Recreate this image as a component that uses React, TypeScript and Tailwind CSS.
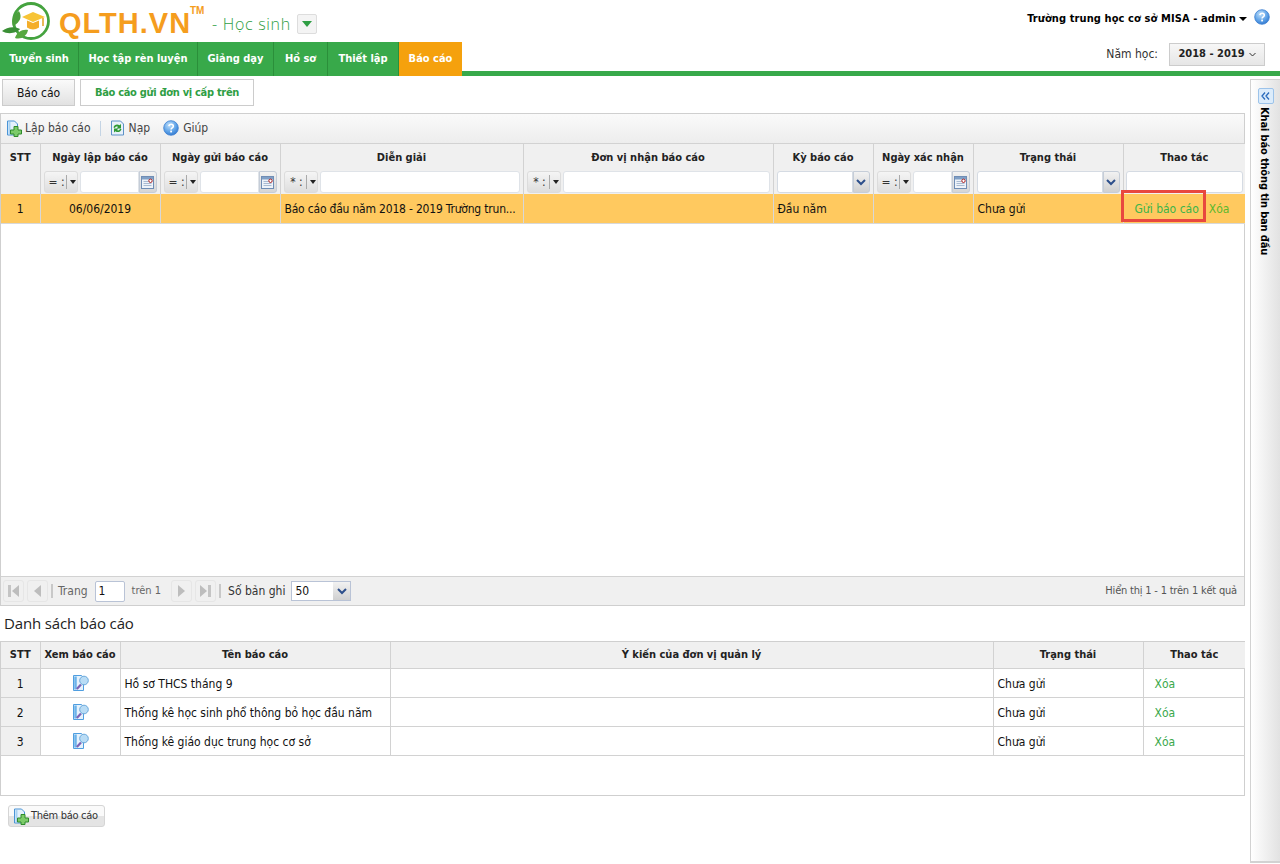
import React from "react";

const topCols = [39, 120, 120, 243, 250, 100, 100, 150, 122];
const bottomCols = [39, 80, 270, 603, 150, 102];

function HelpIcon({ size = 16 }: { size?: number }) {
  return (
    <svg width={size} height={size} viewBox="0 0 16 16" className="shrink-0">
      <defs>
        <radialGradient id="hg" cx="40%" cy="30%" r="80%">
          <stop offset="0" stopColor="#bfe0fb" />
          <stop offset="0.6" stopColor="#5a9fe6" />
          <stop offset="1" stopColor="#2a6ec8" />
        </radialGradient>
      </defs>
      <circle cx="8" cy="8" r="7.3" fill="url(#hg)" stroke="#3b7fd0" strokeWidth="0.8" />
      <path d="M5.8 6.2c.2-1.3 1.2-1.9 2.3-1.9 1.3 0 2.2.8 2.2 1.9 0 1.7-2.2 1.6-2.2 3.2" fill="none" stroke="#fff" strokeWidth="1.6" />
      <rect x="7.2" y="10.6" width="1.8" height="1.8" fill="#fff" />
    </svg>
  );
}

function DocPlusIcon() {
  return (
    <svg width="17" height="17" viewBox="0 0 17 17" className="shrink-0">
      <path d="M1.5 1h7l3 3v11h-10z" fill="#e4f1fc" stroke="#4a94d6" />
      <path d="M3.500 2v12" stroke="#a9d2f2" strokeWidth="2" />
      <path d="M8 6.500h4v3.500h3.500v4H12v2.500H8V14H4.500v-4H8z" fill="#7ccb69" stroke="#2f8a2c" />
    </svg>
  );
}

function RefreshIcon() {
  return (
    <svg width="15" height="16" viewBox="0 0 15 16" className="shrink-0">
      <path d="M1.5 1h9l3 3v11h-12z" fill="#e8f1fa" stroke="#5d92c8" />
      <path d="M3.500 7.500C4 4.500 7.500 3.500 9.500 5.300L11 4v4.500H6.500l1.500-1.500C7 6.300 5.500 6.500 5 8z" fill="#2f9a34" />
      <path d="M11.500 9c-.5 3-4 4-6 2.200L4 12.500V8.500h4.500L7 10c1 .7 2.500.5 3-1z" fill="#2f9a34" />
    </svg>
  );
}

function ViewReportIcon() {
  return (
    <svg width="16" height="17" viewBox="0 0 16 17">
      <path d="M.5.5h8l2 2v13H.5z" fill="#e6f2fc" stroke="#4f9ee0" />
      <path d="M2.500 1.500v13" stroke="#6db3ea" strokeWidth="2.500" />
      <circle cx="11" cy="5.500" r="4.300" fill="#b9dcf5" stroke="#6aa9dc" />
      <path d="M8 9.500L3.800 14" stroke="#7d62b5" strokeWidth="2.200" />
    </svg>
  );
}

function CalendarButton() {
  return (
    <div className="flex h-full w-[18px] shrink-0 items-center justify-center rounded-r-[3px] border border-[#c5cdd8] bg-gradient-to-b from-[#f2f2f2] to-[#d5d5d5]">
      <svg width="13" height="13" viewBox="0 0 13 13">
        <rect x="0.500" y="0.500" width="12" height="12" fill="#eef3f9" stroke="#6f8db5" />
        <rect x="1" y="1" width="11" height="2.500" fill="#7f9fc6" />
        <path d="M2.500 5.500h5M2.500 7.500h8M2.500 9.500h8" stroke="#a9bbd2" />
        <circle cx="9.500" cy="4.800" r="1.700" fill="#fff" stroke="#a82020" />
      </svg>
    </div>
  );
}

function Chevron() {
  return (
    <svg width="10" height="7" viewBox="0 0 10 7">
      <path d="M1 1l4 4 4-4" fill="none" stroke="#2d4f8b" strokeWidth="2" />
    </svg>
  );
}

function OpBox({ op }: { op: string }) {
  return (
    <div className="flex h-full w-[34px] shrink-0 items-center rounded-[3px] border border-[#dcdcdc] bg-gradient-to-b from-[#f5f5f5] to-[#dedede] text-[12px] font-normal text-[#333]">
      <span className="w-[21px] pl-[3px] whitespace-pre">{op} :</span>
      <span className="h-[14px] w-px bg-[#aaa]" />
      <span className="ml-[3px] h-0 w-0 border-x-[3px] border-t-[4px] border-x-transparent border-t-[#222]" />
    </div>
  );
}

function DateFilter({ op }: { op: string }) {
  return (
    <div className="flex h-[22px] gap-[2px]">
      <OpBox op={op} />
      <div className="flex min-w-0 flex-1">
        <div className="min-w-0 flex-1 rounded-l-[3px] border border-[#dfe3e8] bg-white" />
        <CalendarButton />
      </div>
    </div>
  );
}

function TextFilter({ op }: { op: string }) {
  return (
    <div className="flex h-[22px] gap-[2px]">
      <OpBox op={op} />
      <div className="min-w-0 flex-1 rounded-[3px] border border-[#dfe3e8] bg-white" />
    </div>
  );
}

function ComboFilter() {
  return (
    <div className="flex h-[22px]">
      <div className="min-w-0 flex-1 rounded-l-[3px] border border-[#d5dbe3] bg-white" />
      <div className="flex h-full w-[17px] shrink-0 items-center justify-center rounded-r-[3px] border border-[#c5cdd8] bg-gradient-to-b from-[#f2f2f2] to-[#d0d0d0]">
        <Chevron />
      </div>
    </div>
  );
}

function PagerButton({ dir, end }: { dir: "left" | "right"; end?: boolean }) {
  return (
    <div className="flex h-[22px] w-[21px] items-center justify-center gap-[1px] rounded-[3px] border border-[#e6e6e6]">
      {end && dir === "left" && <span className="h-[12px] w-[3px] bg-[#c4c4c4]" />}
      {dir === "left" ? (
        <span className="h-0 w-0 border-y-[6px] border-r-[7px] border-y-transparent border-r-[#bdbdbd]" />
      ) : (
        <span className="h-0 w-0 border-y-[6px] border-l-[7px] border-y-transparent border-l-[#bdbdbd]" />
      )}
      {end && dir === "right" && <span className="h-[12px] w-[3px] bg-[#c4c4c4]" />}
    </div>
  );
}

function PagerSep() {
  return <span className="mx-[3px] h-[14px] w-[2px] bg-[#c8c8c8]" />;
}

function Logo() {
  return (
    <svg width="50" height="40" viewBox="0 0 50 40" className="shrink-0">
      <circle cx="29" cy="19" r="17.500" fill="none" stroke="#45a33f" strokeWidth="2.800" />
      <path d="M0 29c5-4 12-5 18-2-3 4-12 6-18 2z" fill="#3a8f35" />
      <path d="M11 24c-2-6 0-11 6-15 3 5 2 11-6 15z" fill="#4c9f3c" />
      <path d="M13 36c2-6 7-9 13-8-1 6-7 10-13 8z" fill="#56a83f" />
      <path d="M31 10L20 15l11 5 12-5z" fill="#f7c436" />
      <path d="M25 18.500v7c4 2.500 8 2.500 12 0v-7l-6 2.500z" fill="#f4ae2a" />
      <path d="M41 16v8" stroke="#e0a020" strokeWidth="1.500" />
    </svg>
  );
}

const navItems = [
  { label: "Tuyển sinh", w: "w-[79px]" },
  { label: "Học tập rèn luyện", w: "w-[119px]" },
  { label: "Giảng dạy", w: "w-[76px]" },
  { label: "Hồ sơ", w: "w-[54px]" },
  { label: "Thiết lập", w: "w-[71px]" },
];

const bottomRows = [
  "Hồ sơ THCS tháng 9",
  "Thống kê học sinh phổ thông bỏ học đầu năm",
  "Thống kê giáo dục trung học cơ sở",
];

const headCell = "border-r border-[#d2d2d2] px-[3px] pt-[6px] align-top text-[11px] font-bold text-[#222]";
const headLabel = "mb-[6px] leading-[15px]";

export default function App() {
  return (
    <div className="flex h-[864px] w-[1280px] flex-col overflow-hidden bg-white font-['DejaVu_Sans_Condensed','Liberation_Sans',sans-serif] text-[12px] text-[#111]">
      {/* top bar */}
      <div className="flex h-[42px] shrink-0 items-start justify-between">
        <div className="flex items-start pt-[2px] pl-[2px]">
          <Logo />
          <span className="mt-[5px] ml-[7px] w-[131px] font-['Liberation_Sans',sans-serif] text-[29px] leading-[33px] font-bold tracking-[1px] whitespace-nowrap text-[#f59d1e]">QLTH.VN</span>
          <span className="mt-[3px] w-[13px] font-['Liberation_Sans',sans-serif] text-[10px] leading-[12px] font-bold text-[#f59d1e]">TM</span>
          <span className="mt-[12px] ml-[9px] font-['Open_Sans',sans-serif] text-[16px] leading-[20px] font-light tracking-[0.7px] text-[#2f9e44]">- Học sinh</span>
          <div className="mt-[12px] ml-[6px] flex h-[20px] w-[20px] items-center justify-center rounded-[2px] border border-[#ddd] bg-[#f4f4f4]">
            <span className="h-0 w-0 border-x-[5px] border-t-[6px] border-x-transparent border-t-[#2f9e44]" />
          </div>
        </div>
        <div className="flex items-center gap-[7px] pt-[7px] pr-[10px]">
          <span className="mt-[4px] text-[11px] font-bold tracking-[0.1px] text-black">Trường trung học cơ sở MISA - admin</span>
          <span className="mt-[3px] -ml-[4px] h-0 w-0 border-x-[4px] border-t-[4px] border-x-transparent border-t-black" />
          <HelpIcon />
        </div>
      </div>

      {/* nav */}
      <div className="flex h-[34px] shrink-0 border-b-[5px] border-[#38a94a]">
        {navItems.map((n) => (
          <div key={n.label} className={`flex h-[34px] ${n.w} items-center justify-center border-r border-[#2b8f3a] bg-[#38a94a] pt-px text-[11px] font-bold text-white`}>
            {n.label}
          </div>
        ))}
        <div className="flex h-[34px] w-[63px] items-center justify-center bg-[#f5a10d] pt-px text-[11px] font-bold text-white">Báo cáo</div>
        <div className="-mt-[5px] ml-auto flex h-[34px] items-center gap-[11px] pr-[15px]">
          <span className="text-[#333]">Năm học:</span>
          <div className="flex h-[23px] w-[96px] items-center justify-center gap-[4px] border border-[#ccc] bg-gradient-to-b from-[#f7f7f7] to-[#e6e6e6] pt-px text-[11px] font-bold text-[#222]">
            2018 - 2019
            <svg width="7" height="5" viewBox="0 0 7 5"><path d="M.5 1l3 3 3-3" fill="none" stroke="#333" /></svg>
          </div>
        </div>
      </div>

      <div className="flex min-h-0 flex-1">
        {/* content */}
        <div className="flex w-[1245px] shrink-0 flex-col">
          <div className="mt-[3px] flex h-[27px] shrink-0 gap-[5px] pl-[2px]">
            <div className="flex w-[73px] items-center justify-center border border-[#ccc] bg-gradient-to-b from-[#fafafa] to-[#e2e2e2] pt-px">Báo cáo</div>
            <div className="flex w-[174px] items-center justify-center border border-[#ccc] bg-white pt-px text-[11px] font-bold tracking-[-0.3px] text-[#2f9e44]">Báo cáo gửi đơn vị cấp trên</div>
          </div>

          {/* top grid */}
          <div className="mt-[7px] flex h-[493px] shrink-0 flex-col border border-[#cfcfcf]">
            <div className="flex h-[30px] shrink-0 items-center border-b border-[#d2d2d2] bg-gradient-to-b from-[#fafafa] to-[#ededed] pb-px pl-[5px] text-[#444]">
              <DocPlusIcon />
              <span className="ml-[2px]">Lập báo cáo</span>
              <span className="mx-[9px] h-[15px] w-px bg-[#c4d4e4]" />
              <RefreshIcon />
              <span className="ml-[4px]">Nạp</span>
              <span className="ml-[13px]"><HelpIcon /></span>
              <span className="ml-[4px]">Giúp</span>
            </div>

            <table className="w-[1244px] table-fixed border-collapse">
              <colgroup>
                {topCols.map((w, i) => (
                  <col key={i} style={{ width: w }} />
                ))}
              </colgroup>
              <thead>
                <tr className="h-[50px] bg-[#f0f0f0] text-center">
                  <th className={headCell}>STT</th>
                  <th className={headCell}>
                    <div className={headLabel}>Ngày lập báo cáo</div>
                    <DateFilter op="=" />
                  </th>
                  <th className={headCell}>
                    <div className={headLabel}>Ngày gửi báo cáo</div>
                    <DateFilter op="=" />
                  </th>
                  <th className={headCell}>
                    <div className={headLabel}>Diễn giải</div>
                    <TextFilter op="*" />
                  </th>
                  <th className={headCell}>
                    <div className={headLabel}>Đơn vị nhận báo cáo</div>
                    <TextFilter op="*" />
                  </th>
                  <th className={headCell}>
                    <div className={headLabel}>Kỳ báo cáo</div>
                    <ComboFilter />
                  </th>
                  <th className={headCell}>
                    <div className={headLabel}>Ngày xác nhận</div>
                    <DateFilter op="=" />
                  </th>
                  <th className={headCell}>
                    <div className={headLabel}>Trạng thái</div>
                    <ComboFilter />
                  </th>
                  <th className="px-[2px] pt-[6px] align-top text-[11px] font-bold text-[#222]">
                    <div className={headLabel}>Thao tác</div>
                    <div className="h-[22px] rounded-[3px] border border-[#d5dbe3] bg-white" />
                  </th>
                </tr>
              </thead>
              <tbody>
                <tr className="h-[29px] bg-[#ffc95f] [&>td]:border-r [&>td]:border-b [&>td]:border-[#d8d8d8] [&>td]:pt-[2px]">
                  <td className="text-center">1</td>
                  <td className="text-center">06/06/2019</td>
                  <td />
                  <td className="px-[4px] tracking-[-0.2px] whitespace-nowrap">Báo cáo đầu năm 2018 - 2019 Trường trun...</td>
                  <td />
                  <td className="px-[4px]">Đầu năm</td>
                  <td />
                  <td className="px-[4px]">Chưa gửi</td>
                  <td className="relative !border-r-0 px-[11px] whitespace-nowrap text-[#3cb54a]">
                    Gửi báo cáo
                    <span className="ml-[10px] text-[#5bb82e]">Xóa</span>
                    <div className="absolute -top-[4px] left-[-3px] h-[32px] w-[85px] border-[3px] border-[#e8483f]" />
                  </td>
                </tr>
              </tbody>
            </table>

            <div className="flex-1" />

            <div className="flex h-[29px] shrink-0 items-center border-t border-[#d2d2d2] bg-[#f0f0f0] pl-[2px] text-[#555]">
              <PagerButton dir="left" end />
              <span className="w-[3px]" />
              <PagerButton dir="left" />
              <PagerSep />
              <span className="ml-[2px] text-[#666]">Trang</span>
              <div className="mx-[7px] flex h-[21px] w-[30px] items-center rounded-[2px] border border-[#b9c3d6] bg-white pl-[3px] text-[#111]">1</div>
              <span className="text-[11px] text-[#666]">trên 1</span>
              <span className="ml-[4px]"><PagerSep /></span>
              <PagerButton dir="right" />
              <span className="w-[3px]" />
              <PagerButton dir="right" end />
              <PagerSep />
              <span className="ml-[4px] text-[#333]">Số bản ghi</span>
              <div className="ml-[6px] flex h-[20px] w-[60px] border border-[#b9c3d6] bg-white">
                <span className="flex-1 pl-[3px] text-[#111]">50</span>
                <span className="flex w-[17px] items-center justify-center bg-gradient-to-b from-[#f2f2f2] to-[#d0d0d0]"><Chevron /></span>
              </div>
              <span className="mr-[7px] ml-auto text-[11px] tracking-[-0.2px]">Hiển thị 1 - 1 trên 1 kết quả</span>
            </div>
          </div>

          <div className="flex h-[35px] shrink-0 items-center pl-[4px] font-['Open_Sans',sans-serif] text-[15px] tracking-[-0.15px] text-[#222]">Danh sách báo cáo</div>

          {/* bottom grid */}
          <div className="h-[155px] shrink-0 border border-[#cfcfcf]">
            <table className="w-[1244px] table-fixed border-collapse">
              <colgroup>
                {bottomCols.map((w, i) => (
                  <col key={i} style={{ width: w }} />
                ))}
              </colgroup>
              <thead>
                <tr className="h-[26px] bg-[#f0f0f0] text-center text-[11px] font-bold text-[#222] [&>th]:border-r [&>th]:border-b [&>th]:border-[#d2d2d2]">
                  <th>STT</th>
                  <th>Xem báo cáo</th>
                  <th>Tên báo cáo</th>
                  <th>Ý kiến của đơn vị quản lý</th>
                  <th>Trạng thái</th>
                  <th className="!border-r-0">Thao tác</th>
                </tr>
              </thead>
              <tbody>
                {bottomRows.map((name, i) => (
                  <tr key={name} className="h-[29px] [&>td]:border-r [&>td]:border-b [&>td]:border-[#d2d2d2] [&>td]:pt-[2px]">
                    <td className="bg-[#f0f0f0] text-center">{i + 1}</td>
                    <td>
                      <div className="flex justify-center pl-px"><ViewReportIcon /></div>
                    </td>
                    <td className="px-[4px]">{name}</td>
                    <td />
                    <td className="px-[4px]">Chưa gửi</td>
                    <td className="!border-r-0 px-[11px] text-[#3aa84a]">Xóa</td>
                  </tr>
                ))}
              </tbody>
            </table>
          </div>

          <div className="mt-[9px] ml-[8px] flex h-[22px] w-[97px] items-center rounded-[3px] border border-[#d5d5d5] bg-gradient-to-b from-[#fafafa] from-50% to-[#e4e4e4] to-50% pl-[4px] text-[11px] tracking-[-0.3px] whitespace-nowrap text-[#333]">
            <DocPlusIcon />
            <span className="ml-[1px]">Thêm báo cáo</span>
          </div>
        </div>

        {/* right collapsed panel */}
        <div className="mt-[3px] mb-[1px] ml-[5px] flex w-[30px] shrink-0 flex-col items-center border-t border-b-[2px] border-l border-[#d2d2d2] bg-gradient-to-r from-white to-[#e2e2e2]">
          <div className="mt-[8px] flex h-[16px] w-[16px] items-center justify-center rounded-[2px] border border-[#9cc3ea] bg-[#dcecfb]">
            <svg width="9" height="8" viewBox="0 0 9 8"><path d="M4 .5L1 4l3 3.500M8 .5L5 4l3 3.500" fill="none" stroke="#2a6bbd" strokeWidth="1.300" /></svg>
          </div>
          <div className="mt-[3px] -ml-[3px] text-[11px] font-bold tracking-[-0.15px] whitespace-nowrap text-black [writing-mode:vertical-rl]">Khai báo thông tin ban đầu</div>
        </div>
      </div>
    </div>
  );
}
